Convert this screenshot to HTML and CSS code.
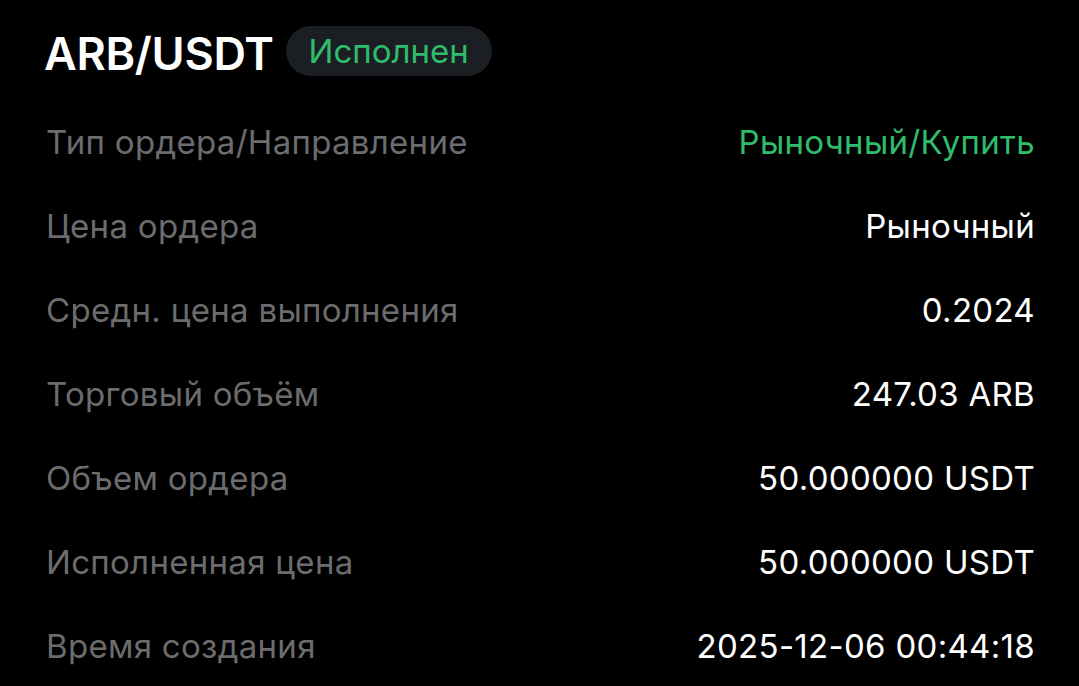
FILE: index.html
```html
<!DOCTYPE html>
<html lang="ru">
<head>
<meta charset="utf-8">
<link rel="stylesheet" href="styles.css">
</head>
<body>
<div class="panel">
  <div class="header">
    <div class="pair">ARB/USDT</div>
    <div class="badge">Исполнен</div>
  </div>
  <div class="row"><span class="label">Тип ордера/Направление</span><span class="value green">Рыночный/Купить</span></div>
  <div class="row"><span class="label">Цена ордера</span><span class="value">Рыночный</span></div>
  <div class="row"><span class="label">Средн. цена выполнения</span><span class="value">0.2024</span></div>
  <div class="row"><span class="label">Торговый объём</span><span class="value">247.03 ARB</span></div>
  <div class="row"><span class="label">Объем ордера</span><span class="value">50.000000 USDT</span></div>
  <div class="row"><span class="label">Исполненная цена</span><span class="value">50.000000 USDT</span></div>
  <div class="row"><span class="label">Время создания</span><span class="value">2025-12-06 00:44:18</span></div>
</div>
</body>
</html>
```
FILE: styles.css
```css
html, body {
  margin: 0;
  padding: 0;
  background: #000;
}
body {
  font-family: Inter, "Noto Sans", sans-serif;
  color: #fff;
  overflow: hidden;
}
.panel {
  padding: 0 44px 0 46px;
}
.header {
  height: 100px;
  padding-top: 6px;
  box-sizing: border-box;
  display: flex;
  align-items: center;
  gap: 12px;
}
.pair {
  font-size: 45px;
  font-weight: 600;
  letter-spacing: -0.3px;
  line-height: 1;
  margin-left: -2px;
}
.badge {
  height: 50px;
  padding: 0 23px;
  border-radius: 25px;
  background: #1b1f23;
  color: #2ebd6d;
  font-size: 33px;
  display: flex;
  align-items: center;
  margin-top: -5px;
}
.row {
  height: 84px;
  display: flex;
  align-items: center;
  justify-content: space-between;
  font-size: 33px;
  letter-spacing: 0.3px;
}
.label {
  color: #6c6c6e;
}
.value {
  color: #fff;
}
.value.green {
  color: #2ebd6d;
}
```
